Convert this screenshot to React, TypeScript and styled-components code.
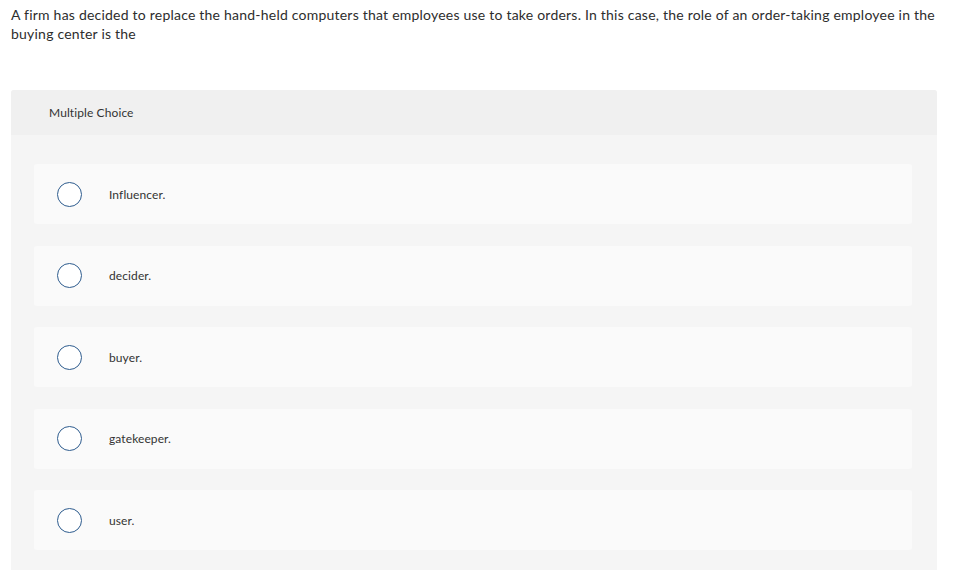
import styled, { createGlobalStyle } from "styled-components";

const GlobalStyle = createGlobalStyle`
  body {
    margin: 0;
    background: #ffffff;
    font-family: "Lato", "Liberation Sans", sans-serif;
    color: #333333;
  }
`;

const Page = styled.div`
  padding: 5px 36px 0 11px;
`;

const Prompt = styled.p`
  margin: 0 0 47px 0;
  font-size: 14px;
  line-height: 19px;
  letter-spacing: 0.22px;
  color: #2d2d2d;
`;

const Panel = styled.section`
  background: #f5f5f5;
  border-radius: 3px 3px 0 0;
  padding-bottom: 20px;
`;

const PanelHeader = styled.div`
  height: 45px;
  display: flex;
  align-items: center;
  padding-left: 38px;
  background: #f0f0f0;
  border-radius: 3px 3px 0 0;
  font-size: 12px;
  letter-spacing: 0.1px;
  color: #333333;
`;

const OptionList = styled.div`
  display: flex;
  flex-direction: column;
  gap: 21.5px;
  padding: 29px 25px 0 23px;
`;

const Option = styled.label`
  height: 60px;
  display: flex;
  align-items: center;
  gap: 27px;
  padding-left: 23px;
  background: #fafafa;
  border-radius: 3px;
  font-size: 12px;
  letter-spacing: 0.1px;
  color: #333333;
  cursor: pointer;
`;

const Radio = styled.span`
  width: 23px;
  height: 23px;
  border: 1.5px solid #2e5c8e;
  border-radius: 50%;
  background: #ffffff;
  flex-shrink: 0;
`;

const options = ["Influencer.", "decider.", "buyer.", "gatekeeper.", "user."];

export default function App() {
  return (
    <>
      <GlobalStyle />
      <Page>
        <Prompt>
          A firm has decided to replace the hand-held computers that employees use to take orders. In this case, the
          role of an order-taking employee in the buying center is the
        </Prompt>
        <Panel>
          <PanelHeader>Multiple Choice</PanelHeader>
          <OptionList>
            {options.map((o) => (
              <Option key={o}>
                <Radio />
                {o}
              </Option>
            ))}
          </OptionList>
        </Panel>
      </Page>
    </>
  );
}
